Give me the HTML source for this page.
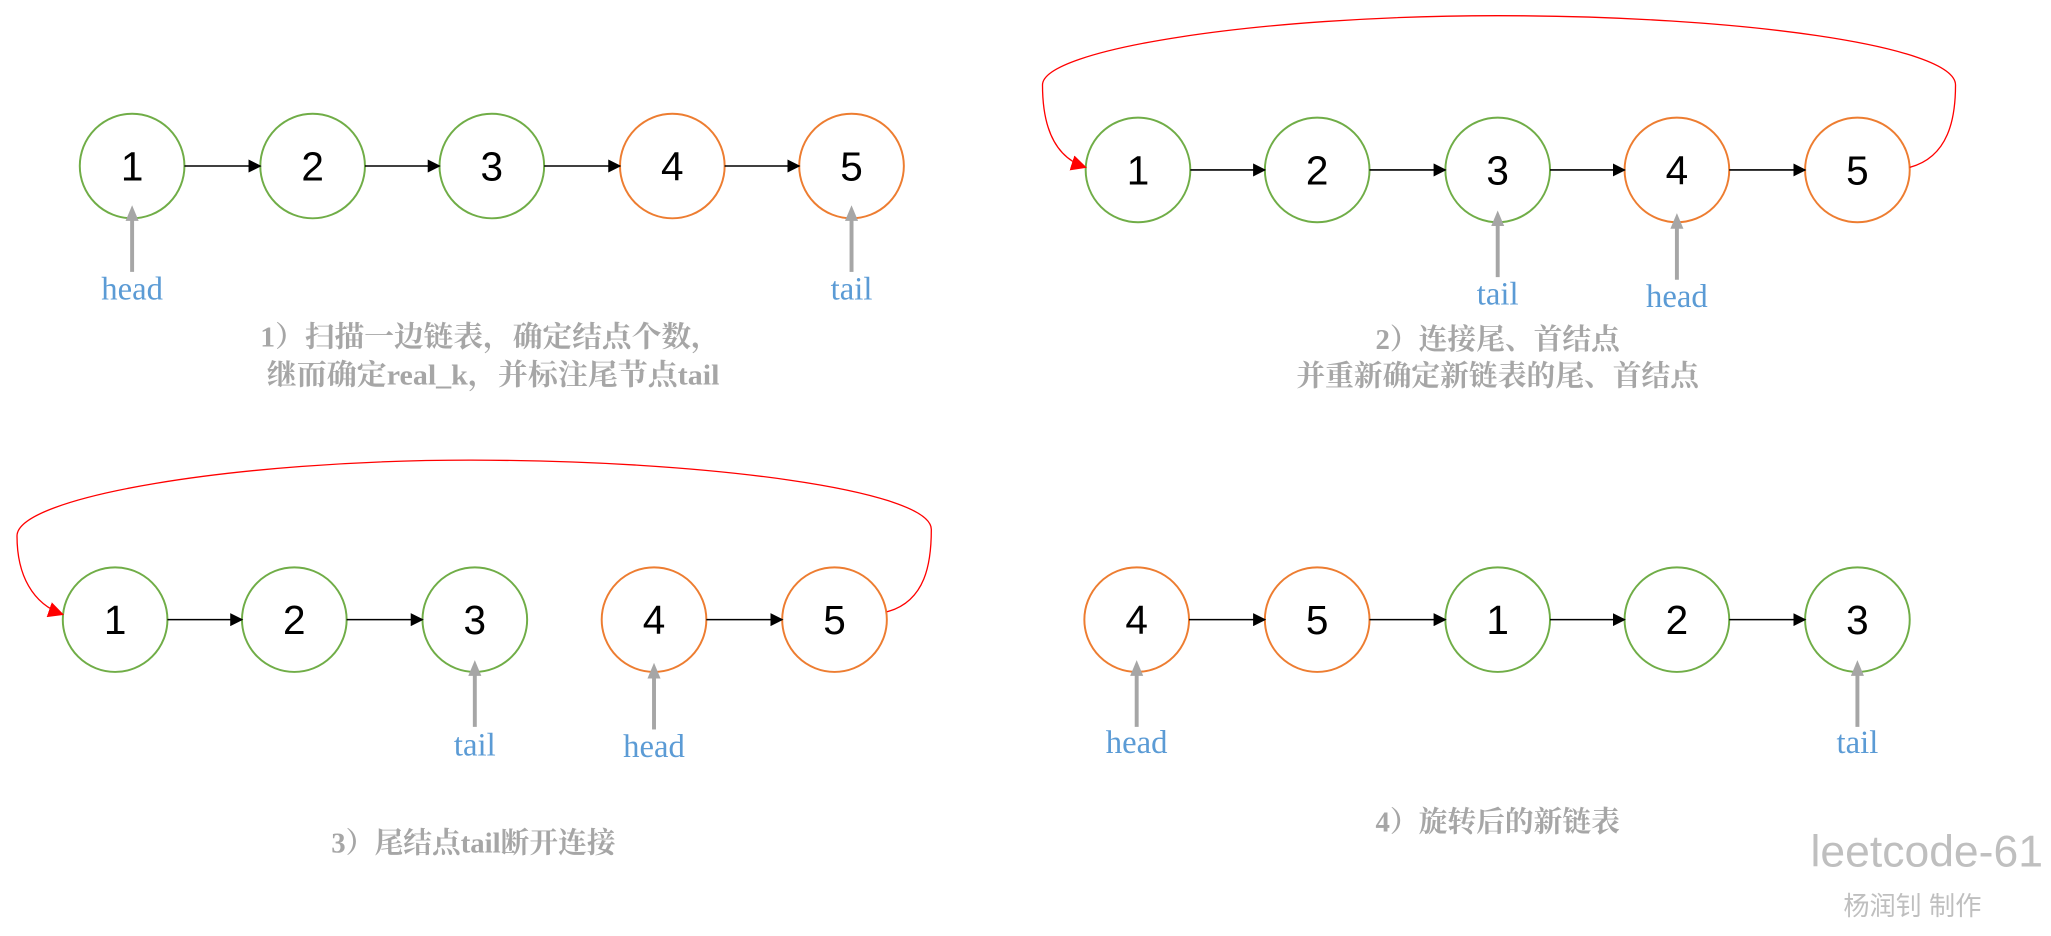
<!DOCTYPE html>
<html><head><meta charset="utf-8"><style>
html,body{margin:0;padding:0;background:#fff;width:2051px;height:936px;overflow:hidden}
svg{display:block}
.n{font-family:"Liberation Sans",sans-serif;font-size:31px;text-anchor:middle;fill:#000}
.l{font-family:"Liberation Serif",serif;font-size:25px;text-anchor:middle;fill:#5b9bd5}
.c{font-family:"Liberation Serif","Noto Serif CJK SC",serif;font-weight:bold;font-size:22px;text-anchor:middle;fill:#a6a6a6}
.w{font-family:"Liberation Sans","Noto Sans CJK SC",sans-serif;text-anchor:middle;fill:#bfbfbf}
</style></head><body>
<svg width="2051" height="936" viewBox="0 0 1568 716" preserveAspectRatio="none" xmlns="http://www.w3.org/2000/svg">
<defs>
<marker id="a" markerWidth="10" markerHeight="10" refX="9" refY="5" orient="auto" markerUnits="userSpaceOnUse"><path d="M0,0 L10,5 L0,10z" fill="#000"/></marker>
<marker id="g" markerWidth="12" markerHeight="12" refX="6" refY="11" orient="0" markerUnits="userSpaceOnUse"><path d="M1,12 L6,0 L11,12z" fill="#a6a6a6"/></marker>
<marker id="r" markerWidth="12" markerHeight="12" refX="11" refY="6" orient="auto" markerUnits="userSpaceOnUse"><path d="M0,0 L12,6 L0,12z" fill="#f00"/></marker>
</defs>
<g fill="#fff" stroke-width="1.5">
<circle cx="101" cy="127" r="40" stroke="#70ad47"/><circle cx="239" cy="127" r="40" stroke="#70ad47"/><circle cx="376" cy="127" r="40" stroke="#70ad47"/><circle cx="514" cy="127" r="40" stroke="#ed7d31"/><circle cx="651" cy="127" r="40" stroke="#ed7d31"/>
<circle cx="870" cy="130" r="40" stroke="#70ad47"/><circle cx="1007" cy="130" r="40" stroke="#70ad47"/><circle cx="1145" cy="130" r="40" stroke="#70ad47"/><circle cx="1282" cy="130" r="40" stroke="#ed7d31"/><circle cx="1420" cy="130" r="40" stroke="#ed7d31"/>
<circle cx="88" cy="474" r="40" stroke="#70ad47"/><circle cx="225" cy="474" r="40" stroke="#70ad47"/><circle cx="363" cy="474" r="40" stroke="#70ad47"/><circle cx="500" cy="474" r="40" stroke="#ed7d31"/><circle cx="638" cy="474" r="40" stroke="#ed7d31"/>
<circle cx="869" cy="474" r="40" stroke="#ed7d31"/><circle cx="1007" cy="474" r="40" stroke="#ed7d31"/><circle cx="1145" cy="474" r="40" stroke="#70ad47"/><circle cx="1282" cy="474" r="40" stroke="#70ad47"/><circle cx="1420" cy="474" r="40" stroke="#70ad47"/>
</g>
<g stroke="#000" stroke-width="1.2" marker-end="url(#a)">
<line x1="141" y1="127" x2="199" y2="127"/><line x1="279" y1="127" x2="336" y2="127"/><line x1="416" y1="127" x2="474" y2="127"/><line x1="554" y1="127" x2="611" y2="127"/>
<line x1="910" y1="130" x2="967" y2="130"/><line x1="1047" y1="130" x2="1105" y2="130"/><line x1="1185" y1="130" x2="1242" y2="130"/><line x1="1322" y1="130" x2="1380" y2="130"/>
<line x1="128" y1="474" x2="185" y2="474"/><line x1="265" y1="474" x2="323" y2="474"/><line x1="540" y1="474" x2="598" y2="474"/>
<line x1="909" y1="474" x2="967" y2="474"/><line x1="1047" y1="474" x2="1105" y2="474"/><line x1="1185" y1="474" x2="1242" y2="474"/><line x1="1322" y1="474" x2="1380" y2="474"/>
</g>
<g stroke="#a6a6a6" stroke-width="3" marker-end="url(#g)">
<line x1="101" y1="208" x2="101" y2="168"/><line x1="651" y1="208" x2="651" y2="168"/>
<line x1="1145" y1="212" x2="1145" y2="172"/><line x1="1282" y1="214" x2="1282" y2="174"/>
<line x1="363" y1="556" x2="363" y2="516"/><line x1="500" y1="558" x2="500" y2="518"/>
<line x1="869" y1="556" x2="869" y2="516"/><line x1="1420" y1="556" x2="1420" y2="516"/>
</g>
<g fill="none" stroke="#f00" stroke-width="1" marker-end="url(#r)">
<path d="M1460,128 C1490,120 1495,90 1495,65 C1495,35 1330,12 1145,12 C960,12 797,38 797,65 C797,95 805,120 830,128"/>
<path d="M678,468 C708,460 712,430 712,405 C712,375 540,352 360,352 C180,352 13,380 13,410 C13,440 25,462 48,470"/>
</g>
<g class="n">
<text x="101" y="138">1</text><text x="239" y="138">2</text><text x="376" y="138">3</text><text x="514" y="138">4</text><text x="651" y="138">5</text>
<text x="870" y="141">1</text><text x="1007" y="141">2</text><text x="1145" y="141">3</text><text x="1282" y="141">4</text><text x="1420" y="141">5</text>
<text x="88" y="485">1</text><text x="225" y="485">2</text><text x="363" y="485">3</text><text x="500" y="485">4</text><text x="638" y="485">5</text>
<text x="869" y="485">4</text><text x="1007" y="485">5</text><text x="1145" y="485">1</text><text x="1282" y="485">2</text><text x="1420" y="485">3</text>
</g>
<g class="l">
<text x="101" y="229">head</text><text x="651" y="229">tail</text>
<text x="1145" y="233">tail</text><text x="1282" y="235">head</text>
<text x="363" y="578">tail</text><text x="500" y="579">head</text>
<text x="869" y="576">head</text><text x="1420" y="576">tail</text>
</g>
<g class="c">
<text x="375" y="265" textLength="352" lengthAdjust="spacingAndGlyphs">1）扫描一边链表，确定结点个数，</text>
<text x="377" y="294" textLength="346" lengthAdjust="spacingAndGlyphs">继而确定real_k，并标注尾节点tail</text>
<text x="1145" y="267">2）连接尾、首结点</text>
<text x="1145" y="295">并重新确定新链表的尾、首结点</text>
<text x="362" y="652">3）尾结点tail断开连接</text>
<text x="1145" y="636">4）旋转后的新链表</text>
</g>
<text class="w" x="1473" y="663" font-size="34">leetcode-61</text>
<text class="w" x="1462" y="700" font-size="20" fill="#b0b0b0">杨润钊 制作</text>
</svg>
</body></html>
